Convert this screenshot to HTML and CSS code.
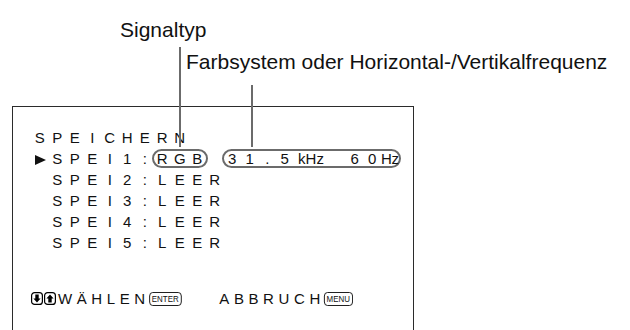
FILE: index.html
```html
<!DOCTYPE html>
<html lang="de">
<head>
    <meta charset="UTF-8">
    <title>Speichern</title>
    <link rel="stylesheet" href="styles.css">
</head>
<body>
    <div class="figure">
        <div class="label label-signal">Signaltyp</div>
        <div class="label label-farb">Farbsystem oder Horizontal-/Vertikalfrequenz</div>

        <div class="screen">
            <div class="row">
                <span class="c">S</span><span class="c">P</span><span class="c">E</span><span class="c">I</span><span class="c">C</span><span class="c">H</span><span class="c">E</span><span class="c">R</span><span class="c">N</span>
            </div>
            <div class="row">
                <span class="c"><span class="cursor"></span></span><span class="c">S</span><span class="c">P</span><span class="c">E</span><span class="c">I</span><span class="c">1</span><span class="c">:</span><span class="oval"><span class="c">R</span><span class="c">G</span><span class="c">B</span></span><span class="c"></span><span class="oval"><span class="c">3</span><span class="c">1</span><span class="c">.</span><span class="c">5</span><span class="c c2">kHz</span><span class="c"></span><span class="c">6</span><span class="c">0</span><span class="c unit">Hz</span></span>
            </div>
            <div class="row">
                <span class="c"></span><span class="c">S</span><span class="c">P</span><span class="c">E</span><span class="c">I</span><span class="c">2</span><span class="c">:</span><span class="c">L</span><span class="c">E</span><span class="c">E</span><span class="c">R</span>
            </div>
            <div class="row">
                <span class="c"></span><span class="c">S</span><span class="c">P</span><span class="c">E</span><span class="c">I</span><span class="c">3</span><span class="c">:</span><span class="c">L</span><span class="c">E</span><span class="c">E</span><span class="c">R</span>
            </div>
            <div class="row">
                <span class="c"></span><span class="c">S</span><span class="c">P</span><span class="c">E</span><span class="c">I</span><span class="c">4</span><span class="c">:</span><span class="c">L</span><span class="c">E</span><span class="c">E</span><span class="c">R</span>
            </div>
            <div class="row">
                <span class="c"></span><span class="c">S</span><span class="c">P</span><span class="c">E</span><span class="c">I</span><span class="c">5</span><span class="c">:</span><span class="c">L</span><span class="c">E</span><span class="c">E</span><span class="c">R</span>
            </div>

            <div class="footer">
                <div class="footer-group">
                    <svg class="key-arrow" width="12" height="13" viewBox="0 0 12 13">
                        <rect x="0.6" y="0.6" width="10.8" height="11.8" rx="3" fill="none" stroke="#000" stroke-width="1.2"/>
                        <path d="M4.3 2.5 H7.7 V6.5 H9.6 L6 10.6 L2.4 6.5 H4.3 Z" fill="#000"/>
                    </svg>
                    <svg class="key-arrow" width="12" height="13" viewBox="0 0 12 13">
                        <rect x="0.6" y="0.6" width="10.8" height="11.8" rx="3" fill="none" stroke="#000" stroke-width="1.2"/>
                        <path d="M4.3 10.5 H7.7 V6.5 H9.6 L6 2.4 L2.4 6.5 H4.3 Z" fill="#000"/>
                    </svg>
                    <span class="word">WÄHLEN</span>
                    <span class="key">ENTER</span>
                </div>
                <div class="footer-group">
                    <span class="word">ABBRUCH</span>
                    <span class="key">MENU</span>
                </div>
            </div>
        </div>

        <div class="leader leader-signal"></div>
        <div class="leader leader-farb"></div>
    </div>
</body>
</html>
```

FILE: styles.css
```css
body {
    margin: 0;
    background-color: #fff;
    font-family: 'Liberation Sans', Arial, sans-serif;
    color: #111;
}
.figure {
    position: relative;
    width: 630px;
    height: 330px;
    overflow: hidden;
    padding-top: 18px;
    box-sizing: border-box;
}
.label {
    font-size: 21px;
    line-height: 24px;
    white-space: nowrap;
}
.label-signal {
    margin-left: 120px;
}
.label-farb {
    margin-left: 186px;
    margin-top: 8px;
}
.screen {
    margin-top: 32px;
    margin-left: 12px;
    width: 402px;
    height: 240px;
    border: 1.5px solid #2b2b2b;
    border-bottom: none;
    padding: 20px 0 0 18px;
    box-sizing: border-box;
}
.row {
    display: flex;
    align-items: center;
    height: 21px;
    font-size: 15px;
}
.c {
    display: inline-block;
    width: 17.5px;
    text-align: center;
    flex: none;
}
.c2 {
    width: 35px;
}
.unit {
    letter-spacing: -0.5px;
}
.oval {
    display: inline-flex;
    align-items: center;
    height: 19px;
    margin: 0 -2px;
    border: 2px solid #6b6b6b;
    border-radius: 11px;
    box-sizing: border-box;
}
.cursor {
    display: inline-block;
    width: 0;
    height: 0;
    margin-left: 2px;
    border-top: 5.5px solid transparent;
    border-bottom: 5.5px solid transparent;
    border-left: 11px solid #111;
    vertical-align: -1px;
}
.footer {
    display: flex;
    gap: 34px;
    margin-top: 37px;
    font-size: 15px;
}
.footer-group {
    display: flex;
    align-items: center;
}
.key-arrow {
    margin-right: 0.5px;
}
.word {
    letter-spacing: 4.6px;
    margin-left: 2px;
}
.key {
    display: inline-block;
    font-size: 9px;
    line-height: 12px;
    padding: 0 2px;
    border: 1.2px solid #111;
    border-radius: 4px;
    transform: scaleX(0.88);
    margin-left: -3px;
}
.leader {
    position: absolute;
    width: 2px;
    background-color: #6b6b6b;
}
.leader-signal {
    left: 179px;
    top: 47px;
    height: 100px;
}
.leader-farb {
    left: 251px;
    top: 85px;
    height: 62px;
}
```
